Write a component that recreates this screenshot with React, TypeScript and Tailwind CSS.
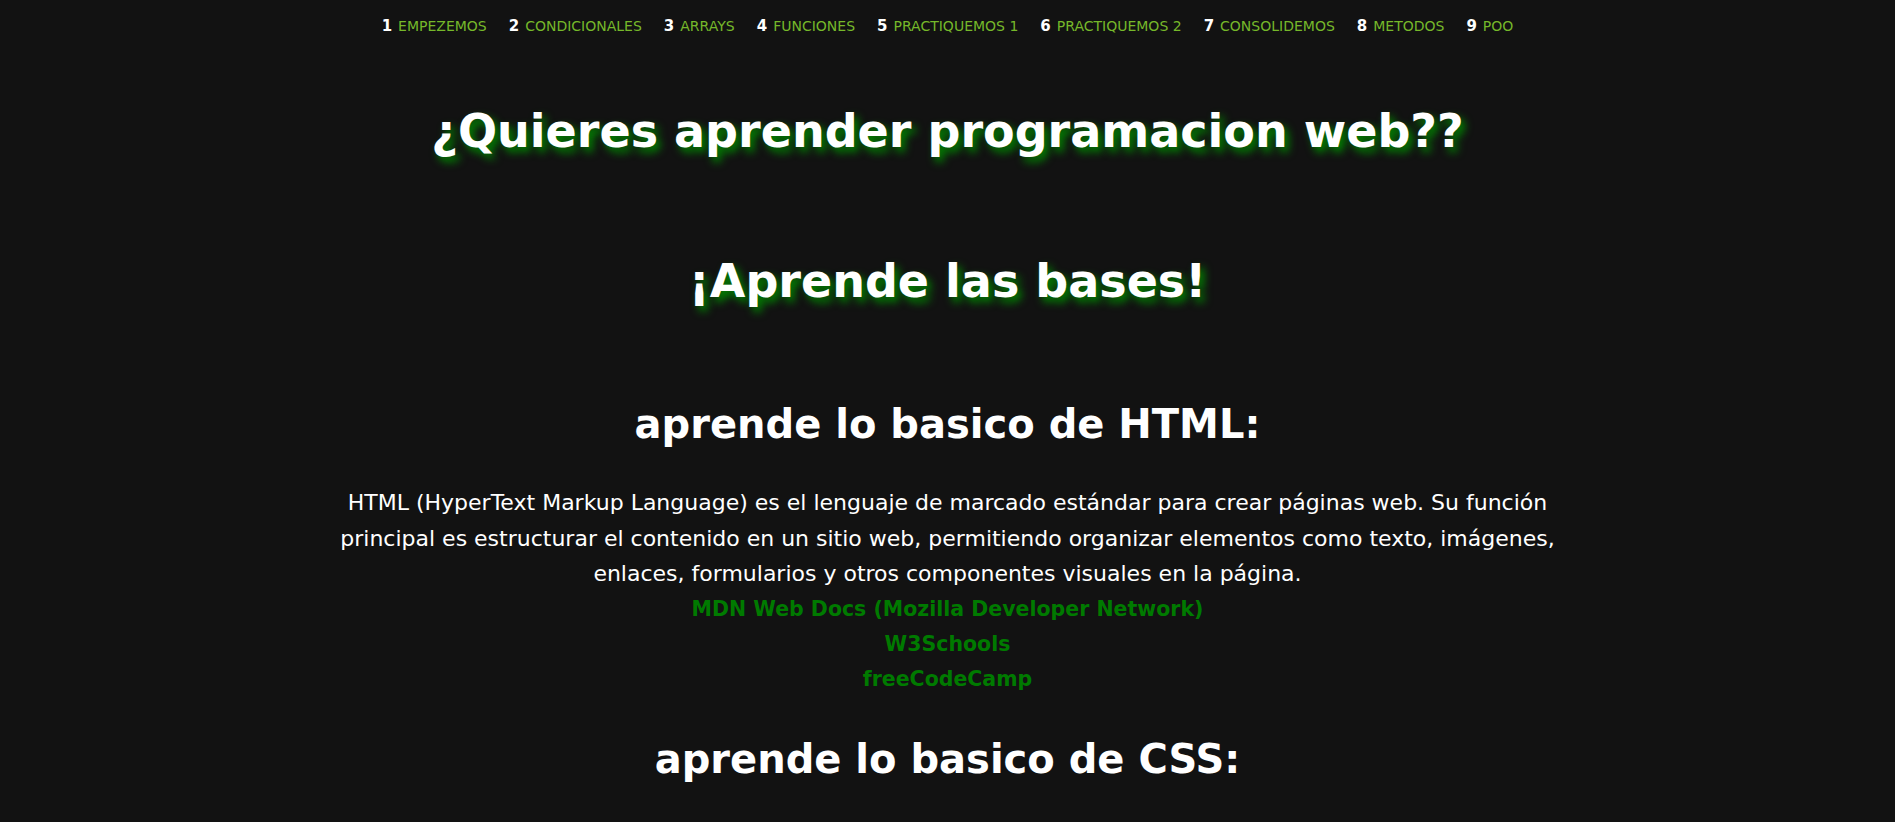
import React from 'react';

const navItems = [
  'EMPEZEMOS',
  'CONDICIONALES',
  'ARRAYS',
  'FUNCIONES',
  'PRACTIQUEMOS 1',
  'PRACTIQUEMOS 2',
  'CONSOLIDEMOS',
  'METODOS',
  'POO',
];

const links = ['MDN Web Docs (Mozilla Developer Network)', 'W3Schools', 'freeCodeCamp'];

const glow = '[text-shadow:4px_5px_8px_#008a00]';

const App: React.FC = () => {
  return (
    <div className="min-h-screen bg-[#121212] text-white font-['DejaVu_Sans',sans-serif] text-center">
      <nav className="flex justify-center items-center gap-[22px] pt-[16px] text-[14px] leading-[20px]">
        {navItems.map((item, i) => (
          <a key={item} href="#" className="flex items-center gap-[6px]">
            <span className="text-white font-semibold text-[15px]">{i + 1}</span>
            <span className="text-[#76b82a]">{item}</span>
          </a>
        ))}
      </nav>
      <main className="flex flex-col items-center">
        <h1 className={`mt-[66px] text-[46px] leading-[58px] font-bold ${glow}`}>¿Quieres aprender programacion web??</h1>
        <h1 className={`mt-[92px] text-[46px] leading-[58px] font-bold ${glow}`}>¡Aprende las bases!</h1>
        <h2 className="mt-[89px] text-[40px] leading-[50px] font-bold">aprende lo basico de HTML:</h2>
        <p className="mt-[36px] max-w-[1235px] text-[22px] leading-[35.5px]">
          HTML (HyperText Markup Language) es el lenguaje de marcado estándar para crear páginas web. Su función principal es estructurar el contenido en un sitio web, permitiendo organizar elementos como texto, imágenes, enlaces, formularios y otros componentes visuales en la página.
        </p>
        <div className="flex flex-col items-center">
          {links.map((l) => (
            <a key={l} href="#" className="text-[#007a00] font-bold text-[20.5px] leading-[35px]">{l}</a>
          ))}
        </div>
        <h2 className="mt-[37px] text-[40px] leading-[50px] font-bold">aprende lo basico de CSS:</h2>
      </main>
    </div>
  );
};

export default App;
